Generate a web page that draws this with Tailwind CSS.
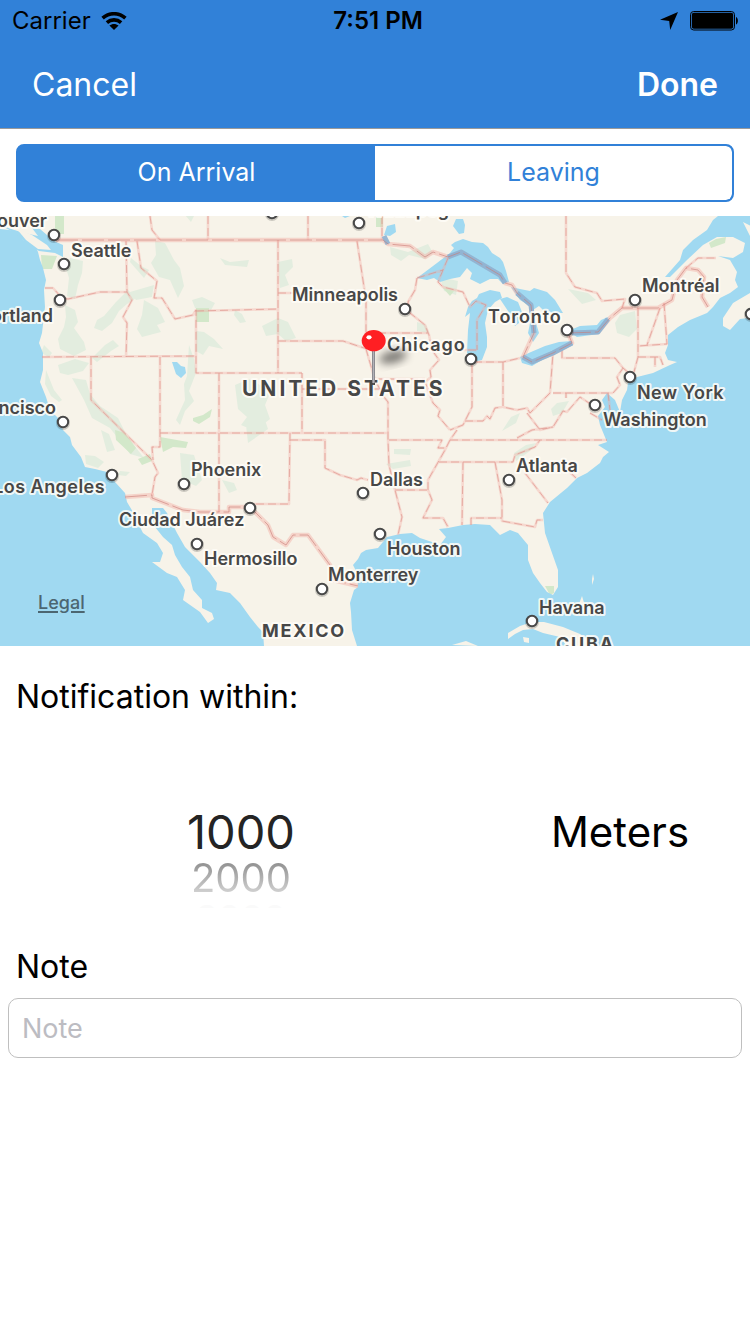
<!DOCTYPE html>
<html lang="en">
<head>
<meta charset="utf-8">
<meta name="viewport" content="width=device-width, initial-scale=1">
<title>Location reminder</title>
<script src="https://cdn.jsdelivr.net/npm/@tailwindcss/browser@4"></script>
</head>
<body class="min-h-screen bg-white font-['Inter','Liberation_Sans',sans-serif] text-black">
<header class="border-b border-[#9a9a9a] bg-[#3181d8]">
  <div class="grid h-[42px] grid-cols-3 items-center px-3 text-[24px]">
    <div class="flex items-center gap-[10px]">
      <span>Carrier</span>
      <svg class="h-[18px] w-[26px]" viewBox="0 0 26 18" aria-label="Wi-Fi">
        <g fill="none" stroke="#000" stroke-width="3.6">
          <path d="M1.6 6.2C8.2.2 17.8.2 24.4 6.2"/>
          <path d="M5.9 10.6C10 7 16 7 20.1 10.6"/>
        </g>
        <path d="M8.4 13.6c2.8-2.1 6.4-2.1 9.2 0L13 18z"/>
      </svg>
    </div>
    <time class="pl-[6px] text-center font-semibold whitespace-nowrap">7:51 PM</time>
    <div class="flex items-center justify-end gap-3">
      <svg class="h-[18px] w-[18px]" viewBox="0 0 18 18" aria-label="Location"><path d="M0 7.800 18 0l-7.800 18-1-8.900z"/></svg>
      <svg class="h-5 w-[48px]" viewBox="0 0 48 20" aria-label="Battery full">
        <rect x=".5" y=".5" width="44" height="18.500" rx="3.200" fill="none" stroke="#000" stroke-width="1"/>
        <rect x="1.800" y="1.800" width="41.400" height="15.900" rx="2"/>
        <path d="M46 6c2.500 1 2.500 6.500 0 7.500z"/>
      </svg>
    </div>
  </div>
  <nav class="flex h-[86px] items-center justify-between px-8 text-[32px] text-white">
    <button type="button">Cancel</button>
    <button type="button" class="font-semibold">Done</button>
  </nav>
</header>
<main>
  <div class="px-4 pt-[15px] pb-[14px]">
    <div class="grid h-[58px] grid-cols-2 overflow-hidden rounded-lg border-2 border-[#3181d8] bg-[#3181d8] text-[25px]" role="group" aria-label="Trigger">
      <button type="button" aria-pressed="true" class="bg-[#3181d8] text-white">On Arrival</button>
      <button type="button" aria-pressed="false" class="rounded-r-md bg-white text-[#3181d8]">Leaving</button>
    </div>
  </div>
  <div class="relative">
  <svg class="block h-[430px] w-full" viewBox="0 216 750 430" preserveAspectRatio="xMidYMid slice" role="img" aria-label="Map of the United States">
    <defs>
      <filter id="soft" x="-50%" y="-50%" width="200%" height="200%"><feGaussianBlur stdDeviation="4"/></filter>
      <linearGradient id="needle"><stop offset="0" stop-color="#77777c"/><stop offset=".5" stop-color="#b2b2b8"/><stop offset="1" stop-color="#77777c"/></linearGradient>
      <path id="national" d="M56 240H383L388 244 410 246 425 257 433 252 448 257 461 252 500 275 505 283 512 285 517 293 531 305 534 333 523 357 532 362 553 353 572 343 568 333 598 332 610 318 622 308H658L672 300 677 280 686 268 698 270 704 277 702 297 708 307M125 497 152 495V498L183 510 200 512H229V507H250L268 525 273 537 286 545 293 535H308L330 565 333 580 358 586"/>
      <path id="states" d="M150 216 152 230 160 240M208 216V240M308 216V240M382 216V240M126 241 127 292 132 300 123 317 127 323 126 357M137 241 141 268 157 281 154 298H162L175 319 193 315 196 310V373H302M196 311 278 309M45 288H53L62 298 68 299 100 292H127M42 357 196 356M91 357V400L152 460 158 473 155 477 152 495M160 357V447H152L153 460M219 373V512M278 240V373M302 373V433M160 433H388M290 433 289 504H250M290 440H325V468L340 475 357 480 361 478 368 480M384 397 388 402V440L389 465 395 490 402 517 398 535M302 389H384M278 341H343L367 349M278 293H366M357 241 366 300V349L375 380 384 397M366 333H428M417 278 415 290 408 302 410 313 425 325 429 335 432 350 439 360 430 370 431 377 425 382 433 403 440 410 438 416 450 430M374 379H425M432 350H477M472 365V407L463 425 450 430M465 421 483 421 487 416 490 419 495 408 502 407M503 362V407L517 410 527 408 530 413 550 393 553 353M474 362H503L520 358M553 393H613M562 350V358H615L623 368 617 377 620 385 613 393M623 368 630 374M638 308V357L634 372M660 308 647 345M664 303 667 344 638 346M638 357H660L663 365M655 357V367M566 216V273L575 287 597 293 602 301 625 299 622 308M686 268 698 258H716M527 413 540 430 553 427 563 411 567 412 580 397 592 405M566 393V398M608 393 610 410M590 413 602 420M389 440H442L438 448H445M450 440H607M457 430 450 440 445 450 428 480V490L432 500 423 518H443L448 527M395 490H428M439 462H513L515 455 535 447 540 440M463 462 462 525M495 462 502 500 502 521 535 527 537 520H543M471 525V518H502M525 473 548 503M540 462 560 463 576 478M517 438 532 430 553 427M448 258 438 282 443 287 463 292 470 307 476 301 486 305 477 320V350M417 278 443 270"/>
      <g id="city"><circle r="7" cy="1" fill="#000" opacity=".18"/><circle r="5.200" fill="#fff" stroke="#484848" stroke-width="2"/></g>
    </defs>
    <rect x="-2000" y="216" width="5000" height="430" fill="#f7f3e9"/>
    <g fill="#e3eddf">
      <path d="M70 258l13 3-1 12-4 12-3 14-8-3 2-18-3-10zM65 305l10 5 3 12-4 6 10 14 2 8-12 6-14-7-2-10 6-12 2-10zM44 345l8 8-3 4-8-4zM104 316l12-14 12-12 8 8-9 6-8 7-7 12-10 8-8-3 3-8zM105 345l8-5 6 6-8 5-14 11-5-4zM130 292l24-7-2 12-16 3zM144 300l14 8 7 14-8 3 4 7-19 5-5-8 5-14zM155 241l10 2 9 17 6 8 4 18-6 12-8-18-11-3-8-14 5-8zM131 258l10 8 8 4-5 8-14-16zM220 258l10 4 19-2-2 7-22-2zM196 331l8 1 10 7 9 10-14-3-6 9-7-4zM192 300l10-3 13 6-4 7-16-2zM235 310l7 4 4 8-6 1-6-8zM189 345l5 14 2 14-7 18 5 10-9 10-5 14-4-5 9-20-1-16 3-8zM58 365l17-6 14 4-6 8-15 4-8-2zM46 370l8 20 8 10-3 2-8-6-6-12zM72 378l14 2 4 14 10 12 18 12 9 18 17 22-14-4-20-26-18-10-8-18zM235 385l14-6 22 12-6 14 5 14-15 12-14-6 6-8-9-8zM246 425l18-8 4 12-20 14zM101 430l8 4 6 16-8 2zM85 455l10 1 9 6-6 6-12-4zM120 471l10 1-4 4-8-1zM180 453l14 2 8 25-6 6-14-6zM222 480l12 3 3 7-8 3zM185 215l9 1-3 6zM278 262l14-3 1 8-8 8 4 10-9 3zM262 326l16-8 10 4 8 16-10 3-8-7-12 2zM390 247l18 5 20-8 5 9-8 6-16-4-8 6-10-6zM417 322l9 3 3 8-12-2zM440 277l18 4-2 14-12-4zM568 289l20 4 8 7-14 4zM620 315l15-4 2 18-8 8-12-4-2-10zM557 403l12-2-7 12-9 3-2-7zM511 417l9-4-4 10-14 8zM394 449h17l-1 6-16-1zM386 464l24-4 1 6-18 3zM514 453l12-8 10-2-6 8-14 10z"/>
    </g>
    <g fill="#d3e8ca">
      <path d="M55 216h9v18h-9zM41 255l16 1-5 13h-10zM196 308h13v14h-13zM376 217h7v10h-7zM709 243l7-4 10-2-1 6-14 5zM193 418l10-3 9-6-2 8-11 7-6-3zM115 430l10 3 11 15-5 6-15-14zM138 459l12-5 2 7-10 4zM160 437l28 5-2 6-13-1-10 5zM443 288l11 3-4 5zM545 586l9 0 0 7-4 2z"/>
    </g>
    <g fill="#a0d9f1">
      <path d="M-2000 216H-1V229L18 231 23 240 34 243 38 252 40 260 43 268 46 280 44 290 45 307 42 333 39 343 43 353 43 370 40 382 46 397 50 410 58 418 63 430 70 437 72 445 81 457 85 467 95 469 107 472 115 482 125 493 127 502 133 512 138 523 143 533 157 543 163 553 160 562 152 562 167 573 177 577 185 590 183 600 200 612 208 623 214 619 212 613 202 608 202 600 193 590 190 577 182 567 175 555 172 545 163 537 155 527 152 517V508L163 508 167 513 177 533 185 547 200 562 210 573 217 583 216 590 230 593 240 603 250 617 258 627 263 632 264 646H-2000z"/>
      <path d="M0 225l20 7 18 4-6-8 8 1 14 12 9 4 0 12-8-4-16-2-10-6-16-13z"/>
      <path fill="#f7f3e9" d="M16 228l16 7 15 10 4 5-13-1-12-9z"/>
      <path d="M357 646 352 630 351 612 350 603 354 590 358 587 357 573 353 565 358 559 361 553 366 550 378 548 387 537 400 534 412 533 420 538 432 542 440 545 446 537 439 529 448 528 463 525 475 524 490 525 500 535 510 530 518 533 528 545 528 560 533 573 540 583 547 592 553 595 558 587V570L552 553 545 533 543 513 550 502 567 488 577 478 587 473 600 463 603 457 609 452 598 445 607 442 600 425 598 416 605 407 602 400 607 393 615 400 620 412 622 400 627 390 628 383 637 377 653 373 670 365 677 362 668 360 665 353 668 345V335L678 327 690 320 707 313 713 307 720 298 730 293 738 287 735 280 737 272 730 260 718 256 733 258 743 252 745 243 733 237 717 237 703 245 687 260 670 277 665 277 680 260 683 250 693 240 700 235 707 230 713 220 718 216H3000V646z"/>
      <path d="M417 278 437 263 450 253 454 248 451 245 455 242 463 239 472 242 483 243 488 247 492 253 500 258 503 262 506 271 509 282 503 284 498 279 490 279 480 284 470 279 472 273 467 268 460 277 450 279 440 282 434 278 427 280z"/>
      <path d="M465 317 468 307 472 301 477 298 479 294 490 290 500 292 502 298 495 302 488 310 485 323 487 337 487 347 482 360 473 362 467 353 468 330 470 313z"/>
      <path d="M511 287 520 289 530 291 534 288 547 292 555 300 563 313 553 313 543 310 539 306 533 310 536 323 539 333 533 342 528 333 532 313 530 306 520 300z"/>
      <path d="M500 299 507 297 518 302 522 312 519 323 515 326 512 318 508 311zM520 357 531 352 545 346 559 342 572 341 573 345 558 352 547 357 532 366 522 363zM568 331 580 326 597 325 601 320 608 317 609 320 603 327 599 334 577 337zM384 235l3-9 8-2 1 8-6 4zM456 219h7l2 6-1 8-5 1-6-8zM342 216h8l-5 2zM172 362l5 0 4 4 4 1 1 6-5 5-5-4z"/>
      <path d="M607 395l3 20-4 5-4-4 4-12z"/>
    </g>
    <g fill="#f7f3e9">
      <path d="M750 293l-17 10-10 15v8l7 4 10-11 60-8v-20zM508 633l12-7 12-4 12 0 19 5 17 7 18 12h-31l-7-9-17-4-10-4-10 1-8 4-7 5zM523 637l6 1v5l-5-1zM582 596l3 10-6-2zM593 574l1 5-2 6v-6zM634 374l10-2 8-1-12 5zM452 645l14-4 12 5zM743 222l8 4v12z"/>
    </g>
    <g fill="none" stroke-linejoin="round">
      <use href="#states" stroke="#f3a9a0" stroke-opacity=".36" stroke-width="2.600"/>
      <use href="#states" stroke="#da8c83" stroke-opacity=".6" stroke-width="1" stroke-dasharray="8 4"/>
      <use href="#national" stroke="#f3a9a0" stroke-opacity=".42" stroke-width="4.500"/>
      <path d="M448 257 461 252 500 275 505 283M517 293 531 305 534 333M523 357 532 362 553 353 572 343M572 333 598 332 608 319M384 236 388 244" stroke="#8db1d1" stroke-opacity=".9" stroke-width="5"/>
      <use href="#national" stroke="#c97b76" stroke-opacity=".6" stroke-width="1" stroke-dasharray="22 4"/>
    </g>
    <use href="#city" x="54" y="235"/><use href="#city" x="64" y="264"/><use href="#city" x="60" y="300"/><use href="#city" x="63" y="422"/><use href="#city" x="112" y="475"/><use href="#city" x="184" y="484"/><use href="#city" x="250" y="508"/><use href="#city" x="197" y="544"/><use href="#city" x="322" y="589"/><use href="#city" x="363" y="493"/><use href="#city" x="380" y="534"/><use href="#city" x="509" y="480"/><use href="#city" x="532" y="621"/><use href="#city" x="595" y="405"/><use href="#city" x="630" y="377"/><use href="#city" x="567" y="330"/><use href="#city" x="635" y="300"/><use href="#city" x="471" y="359"/><use href="#city" x="405" y="309"/><use href="#city" x="359" y="223"/><use href="#city" x="272" y="213"/><use href="#city" x="751" y="314"/>
    <g class="text-[18px] font-semibold" fill="#474747" stroke="#fffdf8" stroke-opacity=".85" stroke-width="4" stroke-linejoin="round" paint-order="stroke">
      <text x="47" y="227" text-anchor="end">Vancouver</text>
      <text x="71" y="257">Seattle</text>
      <text x="53" y="322" text-anchor="end">Portland</text>
      <text x="56" y="414" text-anchor="end">San Francisco</text>
      <text x="105" y="493" text-anchor="end" class="tracking-wide">Los Angeles</text>
      <text x="191" y="476">Phoenix</text>
      <text x="119" y="526">Ciudad Juárez</text>
      <text x="204" y="565">Hermosillo</text>
      <text x="328" y="581">Monterrey</text>
      <text x="370" y="486">Dallas</text>
      <text x="387" y="555">Houston</text>
      <text x="516" y="472">Atlanta</text>
      <text x="539" y="614">Havana</text>
      <text x="603" y="426">Washington</text>
      <text x="637" y="399" class="tracking-wide">New York</text>
      <text x="642" y="292">Montréal</text>
      <text x="488" y="323" class="tracking-wider">Toronto</text>
      <text x="387" y="351" class="tracking-wider">Chicago</text>
      <text x="292" y="301">Minneapolis</text>
      <text x="366" y="216">Winnipeg</text>
      <text x="242" y="396" class="text-[21px] font-bold tracking-[3px]">UNITED STATES</text>
      <text x="556" y="650" class="font-bold tracking-widest">CUBA</text>
      <text x="262" y="637" class="font-bold tracking-widest">MEXICO</text>
    </g>
    <ellipse cx="393" cy="357" rx="14" ry="6" fill="#000" opacity=".5" filter="url(#soft)" transform="rotate(-14 393 357)"/>
    <rect x="372" y="348" width="3" height="37" fill="url(#needle)"/>
    <path d="M372 384h3" stroke="#333" stroke-width="1.500"/>
    <ellipse cx="373.700" cy="340.700" rx="12" ry="10.600" fill="#ff1f23"/>
    <ellipse cx="369" cy="337.300" rx="2.600" ry="2.100" fill="#fff"/>
  </svg>
  <a href="#legal" class="absolute bottom-8 left-[38px] text-[18px] leading-[22px] font-medium text-[#4c6671] underline decoration-2 underline-offset-2">Legal</a>
  </div>

  <h2 class="px-4 pt-[30px] text-[32px] leading-[42px]">Notification within:</h2>
  <div class="mt-[86px] grid h-[104px] grid-cols-[482px_1fr] items-start overflow-hidden text-center">
    <div role="listbox" aria-label="Distance">
      <div role="option" aria-selected="true" class="text-[47px] leading-[56px] text-[#242424]">1000</div>
      <div role="option" aria-selected="false" class="bg-linear-to-b from-[#8c8c8c] to-[#d8d8d8] bg-clip-text text-[40px] leading-9 text-transparent">2000</div>
      <div role="option" aria-selected="false" class="pt-1 text-[36px] leading-9 text-[#fafafa]">3000</div>
    </div>
    <div role="listbox" aria-label="Unit" class="pl-2">
      <div role="option" aria-selected="true" class="text-[42px] leading-[56px]">Meters</div>
    </div>
  </div>
  <form class="mt-[38px] px-2">
    <label for="note" class="block px-2 text-[32px] leading-[42px]">Note</label>
    <input id="note" type="text" placeholder="Note" class="mt-[10px] block h-[60px] w-full rounded-[10px] border border-[#bfbfbf] bg-white px-[13px] text-[27px] placeholder:text-[#bcbcc2]">
  </form>
</main>
</body>
</html>
